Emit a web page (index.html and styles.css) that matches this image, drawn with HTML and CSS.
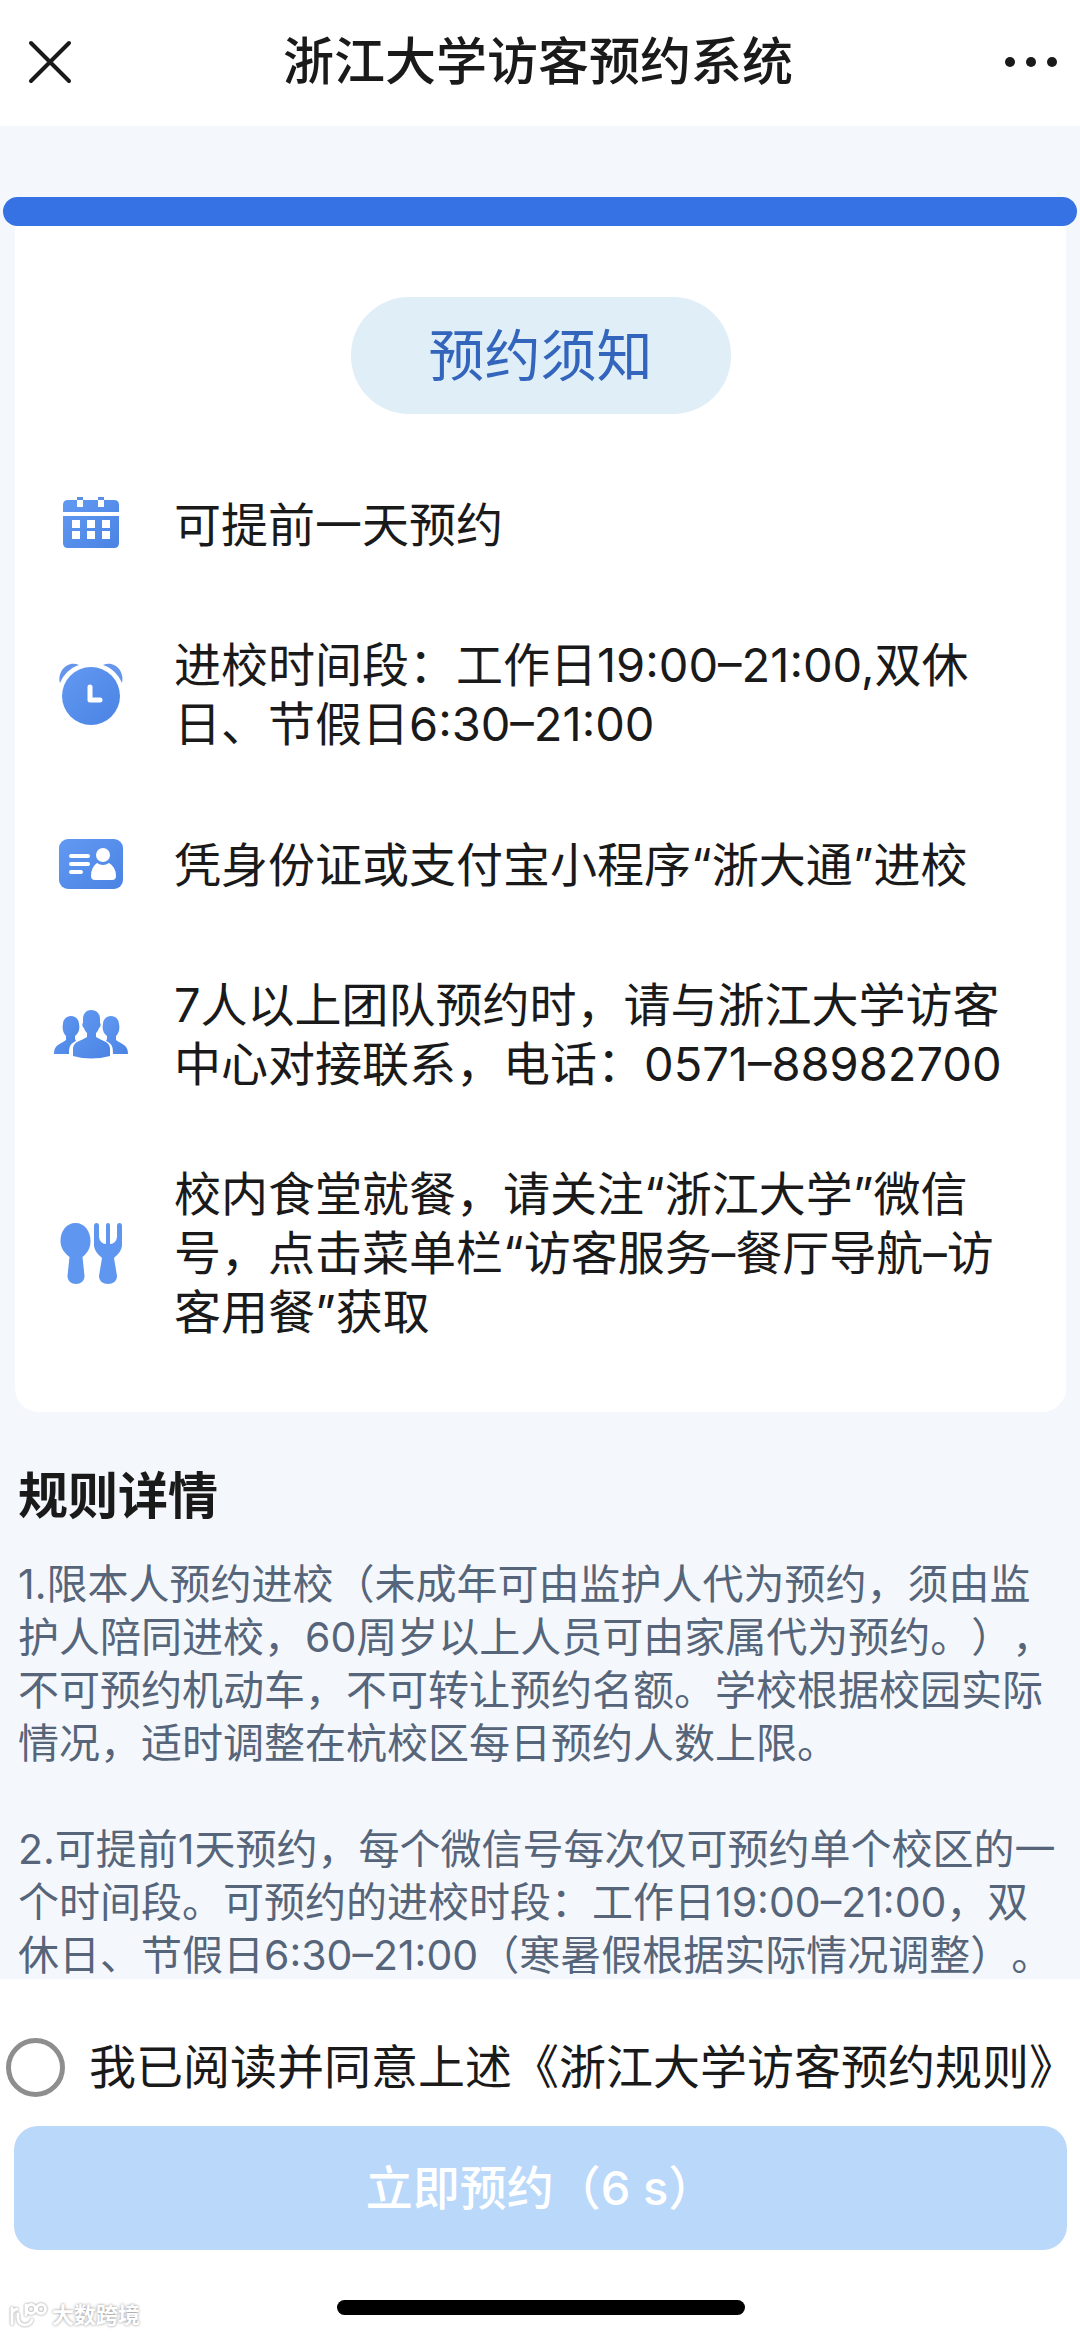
FILE: index.html
```html
<!DOCTYPE html>
<html lang="zh-CN">
<head>
<meta charset="utf-8">
<meta name="viewport" content="width=device-width, initial-scale=1">
<title>浙江大学访客预约系统</title>
<link rel="stylesheet" href="styles.css">
</head>
<body>
<header class="nav">
  <button class="nav-btn" type="button" aria-label="关闭">
    <svg width="44" height="44" viewBox="0 0 44 44" fill="none" stroke="#1a1a1a" stroke-width="4" stroke-linecap="round"><path d="M3 3 41 41M41 3 3 41"/></svg>
  </button>
  <h1 class="nav-title">浙江大学访客预约系统</h1>
  <button class="nav-btn" type="button" aria-label="更多">
    <svg width="54" height="12" viewBox="0 0 54 12" fill="#1a1a1a"><circle cx="6" cy="6" r="5"/><circle cx="27" cy="6" r="5"/><circle cx="48" cy="6" r="5"/></svg>
  </button>
</header>

<main class="content">
  <div class="bar"></div>
  <section class="card">
    <h2 class="pill">预约须知</h2>
    <ul class="notices">
      <li class="notice">
        <svg class="icon" width="76" height="76" viewBox="0 0 76 76">
          <defs><linearGradient id="blue" x1="0" y1="0" x2="1" y2="1"><stop offset="0" stop-color="#6199f2"/><stop offset="1" stop-color="#4b83e4"/></linearGradient></defs>
          <path fill="url(#blue)" d="M10 26v-7q0-5 5-5h46q5 0 5 5v7zM10 30h56v27q0 5-5 5H15q-5 0-5-5z"/>
          <path fill="#fff" d="M24 13h6v8h-6zM45 13h6v8h-6zM19 34h8v8h-8zM34 34h8v8h-8zM49 34h8v8h-8zM19 45h8v8h-8zM34 45h8v8h-8zM49 45h8v8h-8z"/>
          <path fill="#5a8ee0" d="M24 11h6v3h-6zM45 11h6v3h-6z"/>
        </svg>
        <p class="notice-text">可提前一天预约</p>
      </li>
      <li class="notice">
        <svg class="icon" width="76" height="76" viewBox="0 0 76 76">
          <g fill="#6696ec"><path d="M7 27C4 16 14 4 26 9 17 12 11 18 7 27zM69 27C72 16 62 4 50 9c9 3 15 9 19 18z"/></g>
          <circle cx="38" cy="40" r="29" fill="url(#blue)"/>
          <path d="M37 31v13h10" fill="none" stroke="#fff" stroke-width="5" stroke-linecap="round" stroke-linejoin="round"/>
        </svg>
        <p class="notice-text">进校时间段：工作日19:00–21:00,双休日、节假日6:30–21:00</p>
      </li>
      <li class="notice">
        <svg class="icon" width="76" height="76" viewBox="0 0 76 76">
          <rect x="6" y="13" width="64" height="50" rx="9" fill="url(#blue)"/>
          <path d="M18 30h17M18 38h17M18 46h10" stroke="#fff" stroke-width="4" stroke-linecap="round"/>
          <circle cx="50" cy="29" r="7" fill="#fff"/>
          <path d="M44 37q6 4 12 0 7 4 7 13 0 4-4 4H42q-4 0-4-4 0-9 6-13z" fill="#fff"/>
        </svg>
        <p class="notice-text">凭身份证或支付宝小程序“浙大通”进校</p>
      </li>
      <li class="notice">
        <svg class="icon" width="76" height="76" viewBox="0 0 76 76" fill="url(#blue)">
          <path d="M38 14c6 0 9 4 9 9v4c1 0 1 4-1 5-1 3-2 4-3 5v4c6 4 13 4 14 11v8q-19 5-37 0v-8c1-7 8-7 14-11v-4c-1-1-2-2-3-5-2-1-2-5-1-5v-4c0-5 3-9 8-9z"/>
          <path d="M18 20c5 0 8 4 8 8 1 4 0 9-4 12v3l1 2c-6 3-7 5-7 13H1c0-9 5-9 12-14v-4c-3-3-4-8-3-12 0-4 3-8 8-8z"/>
          <path d="M58 20c-5 0-8 4-8 8-1 4 0 9 4 12v3l-1 2c6 3 7 5 7 13h15c0-9-5-9-12-14v-4c3-3 4-8 3-12 0-4-3-8-8-8z"/>
        </svg>
        <p class="notice-text">7人以上团队预约时，请与浙江大学访客中心对接联系，电话：0571–88982700</p>
      </li>
      <li class="notice">
        <svg class="icon" width="76" height="76" viewBox="0 0 76 76" fill="#5f96ef">
          <path d="M22.500 8c9 0 15 8 15 18 0 7-3 12-8 16l2 19c0 5-4 8-8.500 8s-8.500-3-8.500-8l2-19c-5-4-9-9-9-16 0-10 6-18 15-18z"/>
          <path d="M43.500 8q2.500 0 2.500 3v11q1 7 7 7V10q0-2 2-2t2 2v19q6 0 7-7V11q0-3 2.500-3t2.500 3v20c-1 6-5 9-8 12l3 18c0 5-4 8-9 8s-9-3-9-8l3-18c-3-3-7-6-8-12V11q0-3 2.500-3z"/>
        </svg>
        <p class="notice-text">校内食堂就餐，请关注“浙江大学”微信号，点击菜单栏“访客服务–餐厅导航–访客用餐”获取</p>
      </li>
    </ul>
  </section>

  <section class="rules">
    <h2 class="rules-title">规则详情</h2>
    <p class="rule">1.限本人预约进校（未成年可由监护人代为预约，须由监护人陪同进校，60周岁以上人员可由家属代为预约。），不可预约机动车，不可转让预约名额。学校根据校园实际情况，适时调整在杭校区每日预约人数上限。</p>
    <p class="rule">2.可提前1天预约，每个微信号每次仅可预约单个校区的一个时间段。可预约的进校时段：工作日19:00–21:00，双休日、节假日6:30–21:00（寒暑假根据实际情况调整）。</p>
  </section>
</main>

<footer class="footer">
  <label class="agree">
    <input class="agree-box" type="checkbox">
    <span>我已阅读并同意上述《浙江大学访客预约规则》</span>
  </label>
  <button class="submit" type="button">立即预约（6 s）</button>
  <div class="home-row">
    <div class="mark">
      <svg width="40" height="28" viewBox="0 0 40 28" fill="none" stroke="#fff" stroke-width="3" stroke-linecap="round"><path d="M4 7v16M4 12q1-3 5-4M10 13q-1 11 7 11 5 0 7-5M18 14V4"/><circle cx="23" cy="8" r="4.500"/><circle cx="33" cy="8" r="4.500"/></svg>
      <span>大数跨境</span>
    </div>
    <div class="home-indicator"></div>
  </div>
</footer>
</body>
</html>
```
FILE: styles.css
```css
* {
  box-sizing: border-box;
}

body {
  margin: 0;
  height: 100vh;
  display: flex;
  flex-direction: column;
  background: #fff;
  color: #1a1a1a;
  font-family: Inter, "Noto Sans CJK SC", sans-serif;
  text-spacing-trim: space-all;
}

h1, h2, p, ul {
  margin: 0;
  padding: 0;
}

button {
  border: 0;
  font-family: inherit;
}

.nav {
  display: flex;
  align-items: center;
  justify-content: space-between;
  height: 126px;
  padding: 0 22px 2px 28px;
}

.nav-btn {
  display: flex;
  padding: 0;
  background: none;
}

.nav-title {
  font-size: 51px;
  line-height: 60px;
  font-weight: 500;
}

.content {
  flex: 1;
  min-height: 0;
  padding-top: 71px;
  overflow-y: auto;
  scrollbar-width: none;
  background: #f4f8fc;
}

.bar {
  height: 29px;
  margin: 0 3px;
  border-radius: 15px;
  background: #3672e4;
}

.card {
  display: flex;
  flex-direction: column;
  align-items: center;
  margin: 0 14px 0 15px;
  padding: 71px 58px 80px 38px;
  border-radius: 0 0 24px 24px;
  background: #fff;
}

.pill {
  margin-left: 20px;
  padding: 27px 78px 26px;
  border-radius: 58px;
  background: #dfeef7;
  color: #3465bd;
  font-size: 56px;
  line-height: 64px;
  font-weight: 400;
}

.notices {
  width: 100%;
  padding-top: 31px;
  list-style: none;
}

.notice {
  display: flex;
  align-items: center;
  gap: 45px;
  padding: 41px 0;
}

.notice:last-child {
  padding: 48px 0 0;
}

.icon {
  flex: none;
}

.notice-text {
  flex: 1;
  margin: -9px 0;
  font-size: 47px;
  line-height: 59px;
}

.rules {
  padding: 52px 18px 0;
}

.rules-title {
  margin-bottom: 30px;
  font-size: 50px;
  line-height: 64px;
  font-weight: 700;
}

.rule {
  margin-bottom: 53px;
  color: #56657a;
  font-size: 41px;
  line-height: 53px;
}

.footer {
  display: flex;
  flex-direction: column;
  height: 357px;
  padding: 57px 13px 0 14px;
  background: #fff;
}

.agree {
  display: flex;
  align-items: center;
  gap: 24px;
  height: 62px;
  margin: 0 -8px;
  font-size: 47px;
  line-height: 60px;
  white-space: nowrap;
}

.agree-box {
  flex: none;
  appearance: none;
  width: 59px;
  height: 59px;
  margin: 0;
  border: 5px solid #8e8e8e;
  border-radius: 50%;
}

.submit {
  height: 124px;
  margin-top: 28px;
  padding: 0;
  border-radius: 24px;
  background: #bad8fa;
  color: #fff;
  font-size: 47px;
  line-height: 60px;
  font-weight: 500;
}

.home-row {
  display: grid;
  grid-template-columns: 1fr 408px 1fr;
  align-items: center;
  margin-top: 35px;
}

.home-indicator {
  height: 15px;
  border-radius: 8px;
  background: #000;
}

.mark {
  display: flex;
  align-items: center;
  gap: 4px;
  margin-left: -6px;
  padding-top: 16px;
  color: #fff;
  font-size: 22px;
  line-height: 28px;
  font-weight: 700;
  text-shadow: 0 0 3px #888;
}

.mark svg {
  filter: drop-shadow(0 0 1px #888);
}
```
